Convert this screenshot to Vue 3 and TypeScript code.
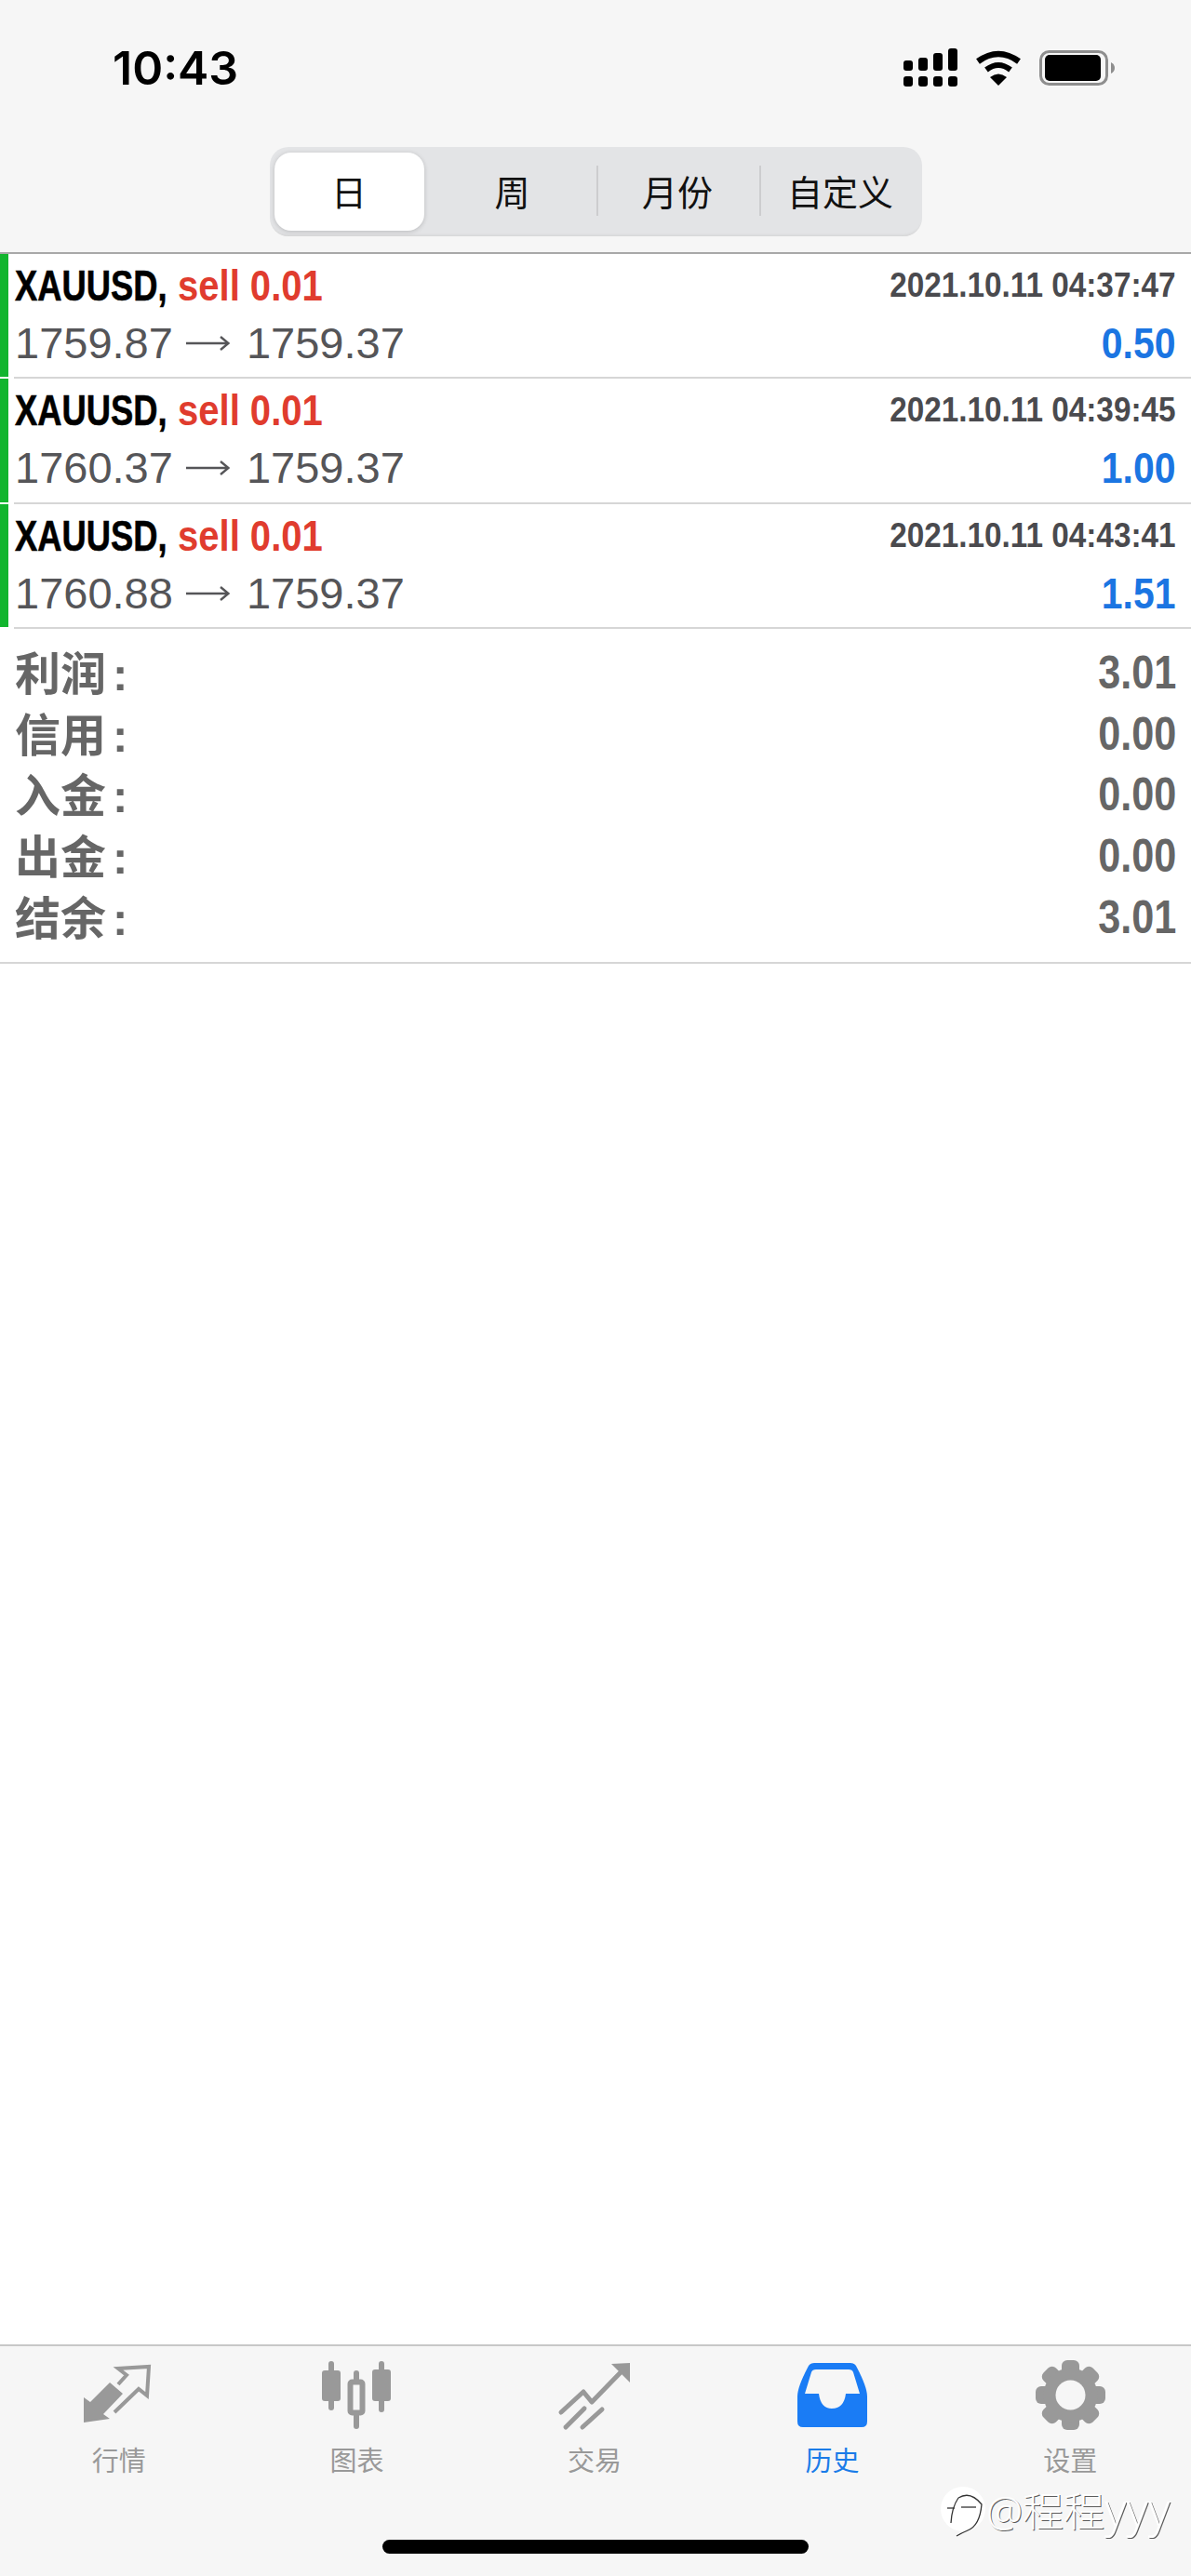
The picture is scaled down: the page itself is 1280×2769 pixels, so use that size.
<script setup lang="ts">
const segments = ['日', '周', '月份', '自定义']

const orders = [
  { time: '2021.10.11 04:37:47', open: '1759.87', close: '1759.37', profit: '0.50' },
  { time: '2021.10.11 04:39:45', open: '1760.37', close: '1759.37', profit: '1.00' },
  { time: '2021.10.11 04:43:41', open: '1760.88', close: '1759.37', profit: '1.51' },
]

const summary = [
  { label: '利润', value: '3.01' },
  { label: '信用', value: '0.00' },
  { label: '入金', value: '0.00' },
  { label: '出金', value: '0.00' },
  { label: '结余', value: '3.01' },
]

const gearAngles = [0, 45, 90, 135, 180, 225, 270, 315]
</script>

<template>
  <div class="page">
    <header class="top">
      <div class="status">
        <span class="clock">10:43</span>
        <div class="status-icons">
          <svg width="58" height="41" viewBox="0 0 58 41" fill="#000">
            <rect x="0" y="13" width="10" height="11" rx="3" />
            <rect x="16" y="10" width="10" height="14" rx="3" />
            <rect x="32" y="5" width="10" height="19" rx="3" />
            <rect x="48" y="0" width="10" height="24" rx="3" />
            <rect x="0" y="30" width="10" height="11" rx="3" />
            <rect x="16" y="30" width="10" height="11" rx="3" />
            <rect x="32" y="30" width="10" height="11" rx="3" />
            <rect x="48" y="30" width="10" height="11" rx="3" />
          </svg>
          <svg width="50" height="38" viewBox="0 0 50 38">
            <path d="M3 12 Q25 -4 47 12" fill="none" stroke="#000" stroke-width="6.5" />
            <path d="M12 21 Q25 11 38 21" fill="none" stroke="#000" stroke-width="6" />
            <path d="M16 29 Q25 22 34 29 L25 38 Z" fill="#000" />
          </svg>
          <svg width="81" height="38" viewBox="0 0 81 38">
            <rect x="1.5" y="1.5" width="71" height="35" rx="9" fill="none" stroke="#8e8e8e" stroke-width="3" />
            <rect x="6" y="5" width="60" height="28" rx="5" fill="#000" />
            <path d="M77 13 Q81 15 81 19 Q81 23 77 25 Z" fill="#8e8e8e" />
          </svg>
        </div>
      </div>
      <div class="segment">
        <div
          v-for="(seg, i) in segments"
          :key="seg"
          class="seg-item"
          :class="{ active: i === 0, divided: i > 1 }"
        >
          {{ seg }}
        </div>
      </div>
    </header>

    <section class="orders">
      <div v-for="order in orders" :key="order.time" class="order">
        <div class="bar"></div>
        <div class="order-body">
          <div class="line">
            <div class="title">
              <span class="symbol">XAUUSD,</span>
              <span class="side">sell 0.01</span>
            </div>
            <span class="time">{{ order.time }}</span>
          </div>
          <div class="line">
            <div class="prices">
              <span>{{ order.open }}</span>
              <svg class="arrow" width="47" height="18" viewBox="0 0 47 18">
                <path d="M0 9 H45 M37 2 L45.5 9 L37 16" fill="none" stroke="#555558" stroke-width="2.4" />
              </svg>
              <span>{{ order.close }}</span>
            </div>
            <span class="profit">{{ order.profit }}</span>
          </div>
        </div>
      </div>
    </section>

    <section class="summary">
      <div v-for="item in summary" :key="item.label" class="sum-row">
        <span class="sum-label">{{ item.label }}<i>:</i></span>
        <span class="sum-value">{{ item.value }}</span>
      </div>
    </section>

    <main class="blank"></main>

    <nav class="tabs">
      <div class="tab">
        <div class="tab-icon">
          <svg width="100" height="85" viewBox="0 0 100 85">
            <polygon points="40,29 54,41 33,63 40,68 12,72 12,45 19,50" fill="#999" />
            <path d="M49 31 L58 21 L49 14 L82 12 L80 43 L71 36 L45 61" fill="none" stroke="#999" stroke-width="4" />
          </svg>
        </div>
        <span>行情</span>
      </div>
      <div class="tab">
        <div class="tab-icon">
          <svg width="74" height="73" viewBox="0 0 74 73">
            <g stroke="#999" stroke-width="6" stroke-linecap="round">
              <line x1="10" y1="3" x2="10" y2="50" />
              <line x1="37" y1="13" x2="37" y2="70" />
              <line x1="64" y1="3" x2="64" y2="52" />
            </g>
            <rect x="0" y="10" width="20" height="33" rx="3" fill="#999" />
            <rect x="54" y="9" width="20" height="34" rx="3" fill="#999" />
            <rect x="30.5" y="22.5" width="13" height="33" rx="2" fill="#f6f6f6" stroke="#999" stroke-width="6" />
          </svg>
        </div>
        <span>图表</span>
      </div>
      <div class="tab">
        <div class="tab-icon">
          <svg width="100" height="90" viewBox="0 0 100 90">
            <g fill="none" stroke="#999" stroke-width="5" stroke-linecap="round" stroke-linejoin="round">
              <path d="M14 63 L38 41 L47 52 L83 15" />
              <path d="M19 79 L39 59" />
              <path d="M37 79 L58 60" />
            </g>
            <polygon points="68,11 88,10 88,31" fill="#999" />
          </svg>
        </div>
        <span>交易</span>
      </div>
      <div class="tab current">
        <div class="tab-icon">
          <svg width="75" height="69" viewBox="0 0 75 69">
            <path
              fill="#1a7cf5"
              fill-rule="evenodd"
              d="M18 0 H57 Q62 0 64 5 Q75 26 75 36 V63 Q75 69 69 69 H6 Q0 69 0 63 V36 Q0 26 11 5 Q13 0 18 0 Z M20 7 H55 Q59 7 60 10 L67 33 H52 Q50 49 37 49 Q25 49 23 33 H8 L15 10 Q16 7 20 7 Z"
            />
          </svg>
        </div>
        <span>历史</span>
      </div>
      <div class="tab">
        <div class="tab-icon">
          <svg width="75" height="75" viewBox="0 0 75 75">
            <rect
              v-for="a in gearAngles"
              :key="a"
              x="28"
              y="0"
              width="19"
              height="20"
              rx="6"
              fill="#999"
              :transform="`rotate(${a} 37.5 37.5)`"
            />
            <circle cx="37.5" cy="37.5" r="29" fill="#999" />
            <circle cx="37.5" cy="37.5" r="16" fill="#f6f6f6" />
          </svg>
        </div>
        <span>设置</span>
      </div>

      <div class="home-bar"></div>
      <div class="watermark">
        <svg width="55" height="66" viewBox="0 0 55 66">
          <circle cx="30" cy="32" r="24" fill="#fff" />
          <g fill="none" stroke="#333" stroke-width="1.3">
            <path d="M25 20 Q38 12 50 27 Q48 50 35 55 Q28 58 23 61" />
            <path d="M25 20 Q18 30 17 47" />
            <path d="M13 31 H21" />
            <path d="M28 30 H44" />
          </g>
        </svg>
        <span>@程程<b>yyy</b></span>
      </div>
    </nav>
  </div>
</template>

<style scoped>
.page {
  width: 1280px;
  height: 2769px;
  display: flex;
  flex-direction: column;
  background: #fff;
  font-family: "Liberation Sans", "Noto Sans CJK SC", sans-serif;
}

.top {
  height: 271px;
  background: #f6f6f6;
  border-bottom: 2px solid #a8a8a8;
  display: flex;
  flex-direction: column;
  align-items: center;
}

.status {
  width: 100%;
  box-sizing: border-box;
  height: 158px;
  padding: 52px 82px 0 121px;
  display: flex;
  justify-content: space-between;
  align-items: flex-start;
}

.clock {
  font-family: Inter, sans-serif;
  font-size: 50px;
  font-weight: 600;
  line-height: 42px;
  color: #000;
}

.status-icons {
  display: flex;
  align-items: center;
  gap: 19px;
  height: 41px;
}

.segment {
  box-sizing: border-box;
  width: 701px;
  height: 96px;
  padding: 6px 0 6px 5px;
  background: #e3e4e6;
  border-radius: 20px;
  display: grid;
  grid-template-columns: 161px 185px 175px 175px;
  box-shadow: inset 0 -4px 3px -3px #d2d2d2;
}

.seg-item {
  position: relative;
  padding-bottom: 3px;
  display: flex;
  align-items: center;
  justify-content: center;
  font-family: "Noto Sans CJK SC", sans-serif;
  font-size: 38px;
  color: #111;
  border-radius: 18px;
}

.seg-item:nth-child(2) {
  padding-left: 5px;
}

.seg-item.active {
  background: #fff;
  box-shadow: 0 1px 5px rgba(0, 0, 0, 0.18);
}

.seg-item.divided::before {
  content: "";
  position: absolute;
  left: 0;
  top: 14px;
  bottom: 16px;
  width: 2px;
  background: #cdcdcf;
}

.order {
  height: 134.33px;
  display: flex;
}

.bar {
  width: 9px;
  margin-bottom: 2px;
  background: #12b52e;
}

.order-body {
  flex: 1;
  margin-left: 6px;
  padding: 3px 16px 0 1px;
  border-bottom: 2px solid #d6d6d6;
}

.line {
  height: 62px;
  line-height: 62px;
  display: flex;
  justify-content: space-between;
  white-space: nowrap;
}

.title {
  display: flex;
  gap: 11px;
  font-size: 46px;
  font-weight: 700;
}

.symbol,
.side {
  display: inline-block;
  transform-origin: left center;
}

.symbol {
  width: 164px;
  color: #000;
  transform: scaleX(0.79);
  -webkit-text-stroke: 0.6px #000;
}

.side {
  width: 152px;
  color: #e03c2e;
  transform: scaleX(0.87);
}

.time {
  font-size: 37px;
  font-weight: 700;
  color: #4a4a4e;
  transform: scaleX(0.9);
  transform-origin: right center;
}

.prices {
  display: flex;
  align-items: center;
  font-size: 47px;
  color: #555558;
}

.arrow {
  margin: 0 18px 0 14px;
}

.profit {
  font-size: 46px;
  font-weight: 700;
  color: #1b75e2;
  transform: scaleX(0.89);
  transform-origin: right center;
}

.summary {
  height: 360px;
  box-sizing: border-box;
  padding: 14px 16px 0 16px;
  border-bottom: 2px solid #d6d6d6;
}

.sum-row {
  height: 65.75px;
  display: flex;
  justify-content: space-between;
  align-items: center;
  color: #666;
  font-weight: 700;
}

.sum-label {
  font-family: "Noto Sans CJK SC", sans-serif;
  font-size: 49px;
  line-height: 60px;
}

.sum-label i {
  font-family: "Liberation Sans", sans-serif;
  font-style: normal;
  margin-left: 7px;
}

.sum-value {
  font-size: 50px;
  transform: scaleX(0.865);
  transform-origin: right center;
}

.blank {
  flex: 1;
}

.tabs {
  position: relative;
  height: 247px;
  box-sizing: content-box;
  padding-right: 2px;
  background: #f6f6f6;
  border-top: 2px solid #c8c8c8;
  display: grid;
  grid-template-columns: repeat(5, 1fr);
}

.tab {
  display: flex;
  flex-direction: column;
  align-items: center;
  font-family: "Noto Sans CJK SC", sans-serif;
  font-size: 29px;
  line-height: 36px;
  color: #999;
}

.tab.current {
  color: #1a7ce8;
}

.tab-icon {
  height: 101px;
  margin-top: 2px;
  display: flex;
  align-items: center;
  justify-content: center;
}

.home-bar {
  position: absolute;
  left: 411px;
  bottom: 24px;
  width: 458px;
  height: 15px;
  border-radius: 8px;
  background: #000;
}

.watermark {
  position: absolute;
  left: 1005px;
  top: 143px;
  display: flex;
  align-items: center;
  color: #fff;
  font-family: "Noto Sans", "Noto Sans CJK SC", sans-serif;
  font-size: 44px;
  font-weight: 300;
  line-height: 56px;
  white-space: nowrap;
  text-shadow: 1px 1px 0 rgba(40, 40, 40, 0.75);
}

.watermark b {
  font-size: 50px;
  font-weight: 300;
}
</style>
